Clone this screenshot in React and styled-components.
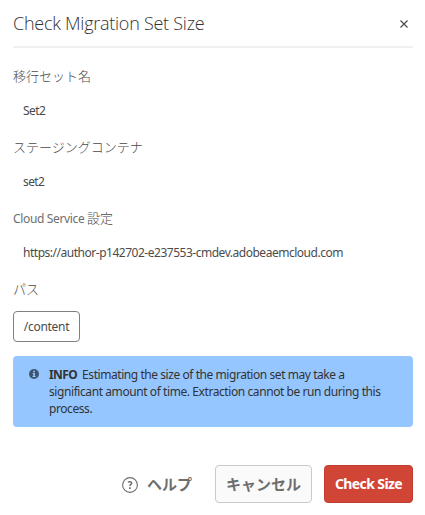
import React from "react";
import styled, { createGlobalStyle } from "styled-components";

const GlobalStyle = createGlobalStyle`
  * { box-sizing: border-box; }
  body {
    margin: 0;
    background: #fff;
    font-family: "Noto Sans", "Noto Sans CJK JP", sans-serif;
    font-size: 12px;
    color: #4b4b4b;
  }
`;

const Dialog = styled.section`
  width: 425px;
  height: 515px;
  padding: 0 12px 0 13px;
  display: flex;
  flex-direction: column;
  overflow: hidden;
`;

const Header = styled.header`
  flex: none;
  height: 48px;
  border-bottom: 2px solid #f0f0f0;
  display: flex;
  align-items: center;
  justify-content: space-between;
  padding-right: 5px;
`;

const Title = styled.h1`
  margin: 0;
  font-family: "Open Sans", sans-serif;
  font-weight: 300;
  font-size: 18px;
  letter-spacing: -0.26px;
  line-height: 46px;
  color: #323232;
  white-space: nowrap;
`;

const CloseButton = styled.button`
  border: 0;
  padding: 0;
  background: none;
  display: flex;
  margin-top: 2px;
`;

const Fields = styled.div`
  flex: none;
  padding-top: 10px;
`;

const Field = styled.div`
  margin-bottom: 3px;
`;

const Label = styled.div`
  height: 36px;
  line-height: 36px;
  font-size: ${(p) => (p.$latin ? "12px" : "13px")};
  letter-spacing: ${(p) => (p.$latin ? "-0.35px" : "0")};
  font-weight: ${(p) => (p.$latin ? 400 : 300)};
  color: ${(p) => (p.$latin ? "#6e6e6e" : "#484848")};
  white-space: nowrap;
`;

const Kanji = styled.span`
  font-size: 13px;
  letter-spacing: 0;
  font-weight: 300;
  color: #484848;
`;

const Value = styled.div`
  height: 32px;
  line-height: 34px;
  padding-left: 10px;
  font-size: 12px;
  letter-spacing: ${(p) => p.$spacing || "0"};
  white-space: nowrap;
`;

const PathTag = styled.div`
  flex: none;
  align-self: flex-start;
  width: 67px;
  height: 31px;
  margin-top: 1px;
  border: 1px solid #808080;
  border-radius: 4px;
  line-height: 30px;
  text-align: center;
  letter-spacing: -0.3px;
`;

const Alert = styled.div`
  flex: none;
  height: 71px;
  margin-top: 14px;
  padding: 10px 16px;
  border-radius: 4px;
  background: #96c6ff;
  color: #323232;
  display: flex;
  gap: 10px;

  svg { flex: none; margin-top: 3px; }
`;

const AlertText = styled.p`
  margin: 0;
  line-height: 17px;
`;

const AlertLine = styled.span`
  display: block;
  white-space: nowrap;
  letter-spacing: ${(p) => p.$spacing};
`;

const AlertTitle = styled.strong`
  margin-right: 5px;
  font-weight: 700;
  letter-spacing: -0.6px;
`;

const Footer = styled.footer`
  flex: none;
  margin-top: 38px;
  display: flex;
  justify-content: flex-end;
  gap: 12px;
`;

const Button = styled.button`
  height: 38px;
  width: ${(p) => p.$width};
  padding: 0;
  border: 1px solid ${(p) => p.$border || "transparent"};
  border-radius: 4px;
  background: ${(p) => p.$fill || "transparent"};
  color: ${(p) => p.$color || "#6e6e6e"};
  font-family: "Noto Sans", "Noto Sans CJK JP", sans-serif;
  font-size: ${(p) => p.$size || "15px"};
  letter-spacing: ${(p) => p.$spacing || "0"};
  font-weight: 700;
  line-height: 34px;
  white-space: nowrap;
  display: flex;
  align-items: center;
  justify-content: center;
  gap: 9px;

  svg { margin-top: 2px; }
`;

const CloseIcon = () => (
  <svg width="8" height="8" viewBox="0 0 8 8" stroke="#4b4b4b" strokeWidth="1.2" fill="none">
    <path d="M.5.5l7 7M7.5.5l-7 7" />
  </svg>
);

const InfoIcon = () => (
  <svg width="10" height="10" viewBox="0 0 10 10">
    <circle cx="5" cy="5" r="5" fill="#3f5671" />
    <path d="M4.2 1.7h1.7v1.5H4.2zM3.7 4.1h2.2v3h.7v1H3.5v-1h.8v-2h-.6z" fill="#96c6ff" />
  </svg>
);

const HelpIcon = () => (
  <svg width="16" height="16" viewBox="0 0 16 16" fill="none" stroke="#6e6e6e">
    <circle cx="8" cy="8" r="7.4" strokeWidth="1.1" />
    <path d="M6 5.2c.6-.7 3.7-1 3.7.9 0 1.3-1.8 1.3-1.8 2.9" strokeWidth="1.5" />
    <path d="M7.1 10.2h1.7v1.7H7.1z" fill="#6e6e6e" stroke="none" />
  </svg>
);

export default function App() {
  return (
    <>
      <GlobalStyle />
      <Dialog role="dialog" aria-labelledby="title">
        <Header>
          <Title id="title">Check Migration Set Size</Title>
          <CloseButton aria-label="Close"><CloseIcon /></CloseButton>
        </Header>
        <Fields>
          <Field>
            <Label>移行セット名</Label>
            <Value $spacing="-0.6px">Set2</Value>
          </Field>
          <Field>
            <Label>ステージングコンテナ</Label>
            <Value $spacing="-0.6px">set2</Value>
          </Field>
          <Field>
            <Label $latin>Cloud Service <Kanji>設定</Kanji></Label>
            <Value $spacing="-0.48px">https://author-p142702-e237553-cmdev.adobeaemcloud.com</Value>
          </Field>
          <Field>
            <Label>パス</Label>
          </Field>
        </Fields>
        <PathTag>/content</PathTag>
        <Alert>
          <InfoIcon />
          <AlertText>
            <AlertLine $spacing="-0.44px"><AlertTitle>INFO</AlertTitle>Estimating the size of the migration set may take a</AlertLine>
            <AlertLine $spacing="-0.42px">significant amount of time. Extraction cannot be run during this</AlertLine>
            <AlertLine $spacing="-0.42px">process.</AlertLine>
          </AlertText>
        </Alert>
        <Footer>
          <Button $width="92px"><HelpIcon />ヘルプ</Button>
          <Button $width="97px" $border="#cacaca" $fill="#fafafa">キャンセル</Button>
          <Button $width="89px" $border="#c43c30" $fill="#d14536" $color="#fff" $size="14px" $spacing="-0.6px">Check Size</Button>
        </Footer>
      </Dialog>
    </>
  );
}
